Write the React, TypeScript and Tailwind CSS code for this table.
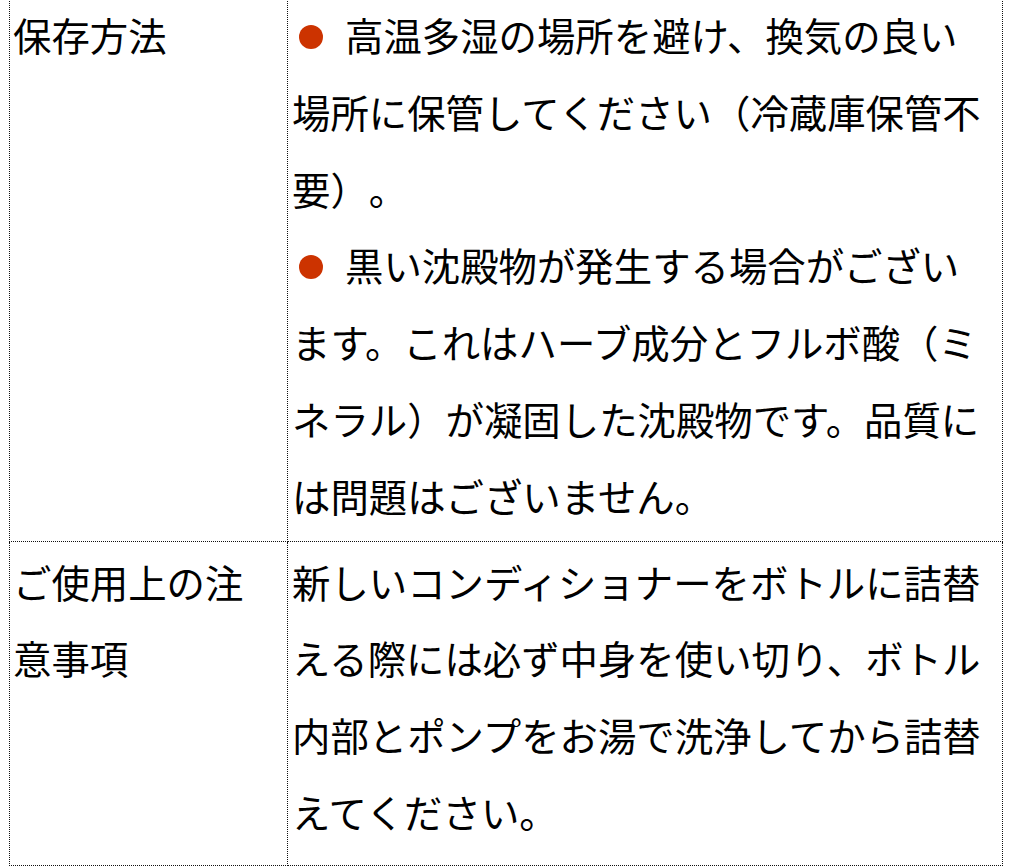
import React from "react";

const Bullet: React.FC = () => (
    <span className="inline-block w-[24px] h-[24px] rounded-full bg-[#cc3300] ml-[7px] mr-[22px] align-[2px]" />
);

const App: React.FC = () => {
    return (
        <div className="min-h-screen bg-white text-black font-['Noto_Sans_CJK_JP','Noto_Sans',sans-serif] [text-spacing-trim:space-all] overflow-hidden">
            <table className="border-collapse ml-[9px] -mt-[8px] w-[994px] text-[38.4px] leading-[76.8px]">
                <tbody>
                    {/* 保存方法 */}
                    <tr>
                        <td className="w-[278px] align-top border border-dotted border-[#111] pl-[3px] pr-[10px] pt-[3px] pb-[7px]">
                            保存方法
                        </td>
                        <td className="align-top border border-dotted border-[#111] pl-[4px] pr-[10px] pt-[3px] pb-[7px]">
                            <p>
                                <Bullet />
                                高温多湿の場所を避け、換気の良い場所に保管してください（冷蔵庫保管不要）。
                            </p>
                            <p>
                                <Bullet />
                                黒い沈殿物が発生する場合がございます。これはハーブ成分とフルボ酸（ミネラル）が凝固した沈殿物です。品質には問題はございません。
                            </p>
                        </td>
                    </tr>
                    {/* ご使用上の注意事項 */}
                    <tr>
                        <td className="align-top border border-dotted border-[#111] pl-[3px] pr-[10px] pt-[1px] pb-[15px]">
                            ご使用上の注意事項
                        </td>
                        <td className="align-top border border-dotted border-[#111] pl-[4px] pr-[10px] pt-[1px] pb-[15px]">
                            新しいコンディショナーをボトルに詰替える際には必ず中身を使い切り、ボトル内部とポンプをお湯で洗浄してから詰替えてください。
                        </td>
                    </tr>
                </tbody>
            </table>
        </div>
    );
};

export default App;
